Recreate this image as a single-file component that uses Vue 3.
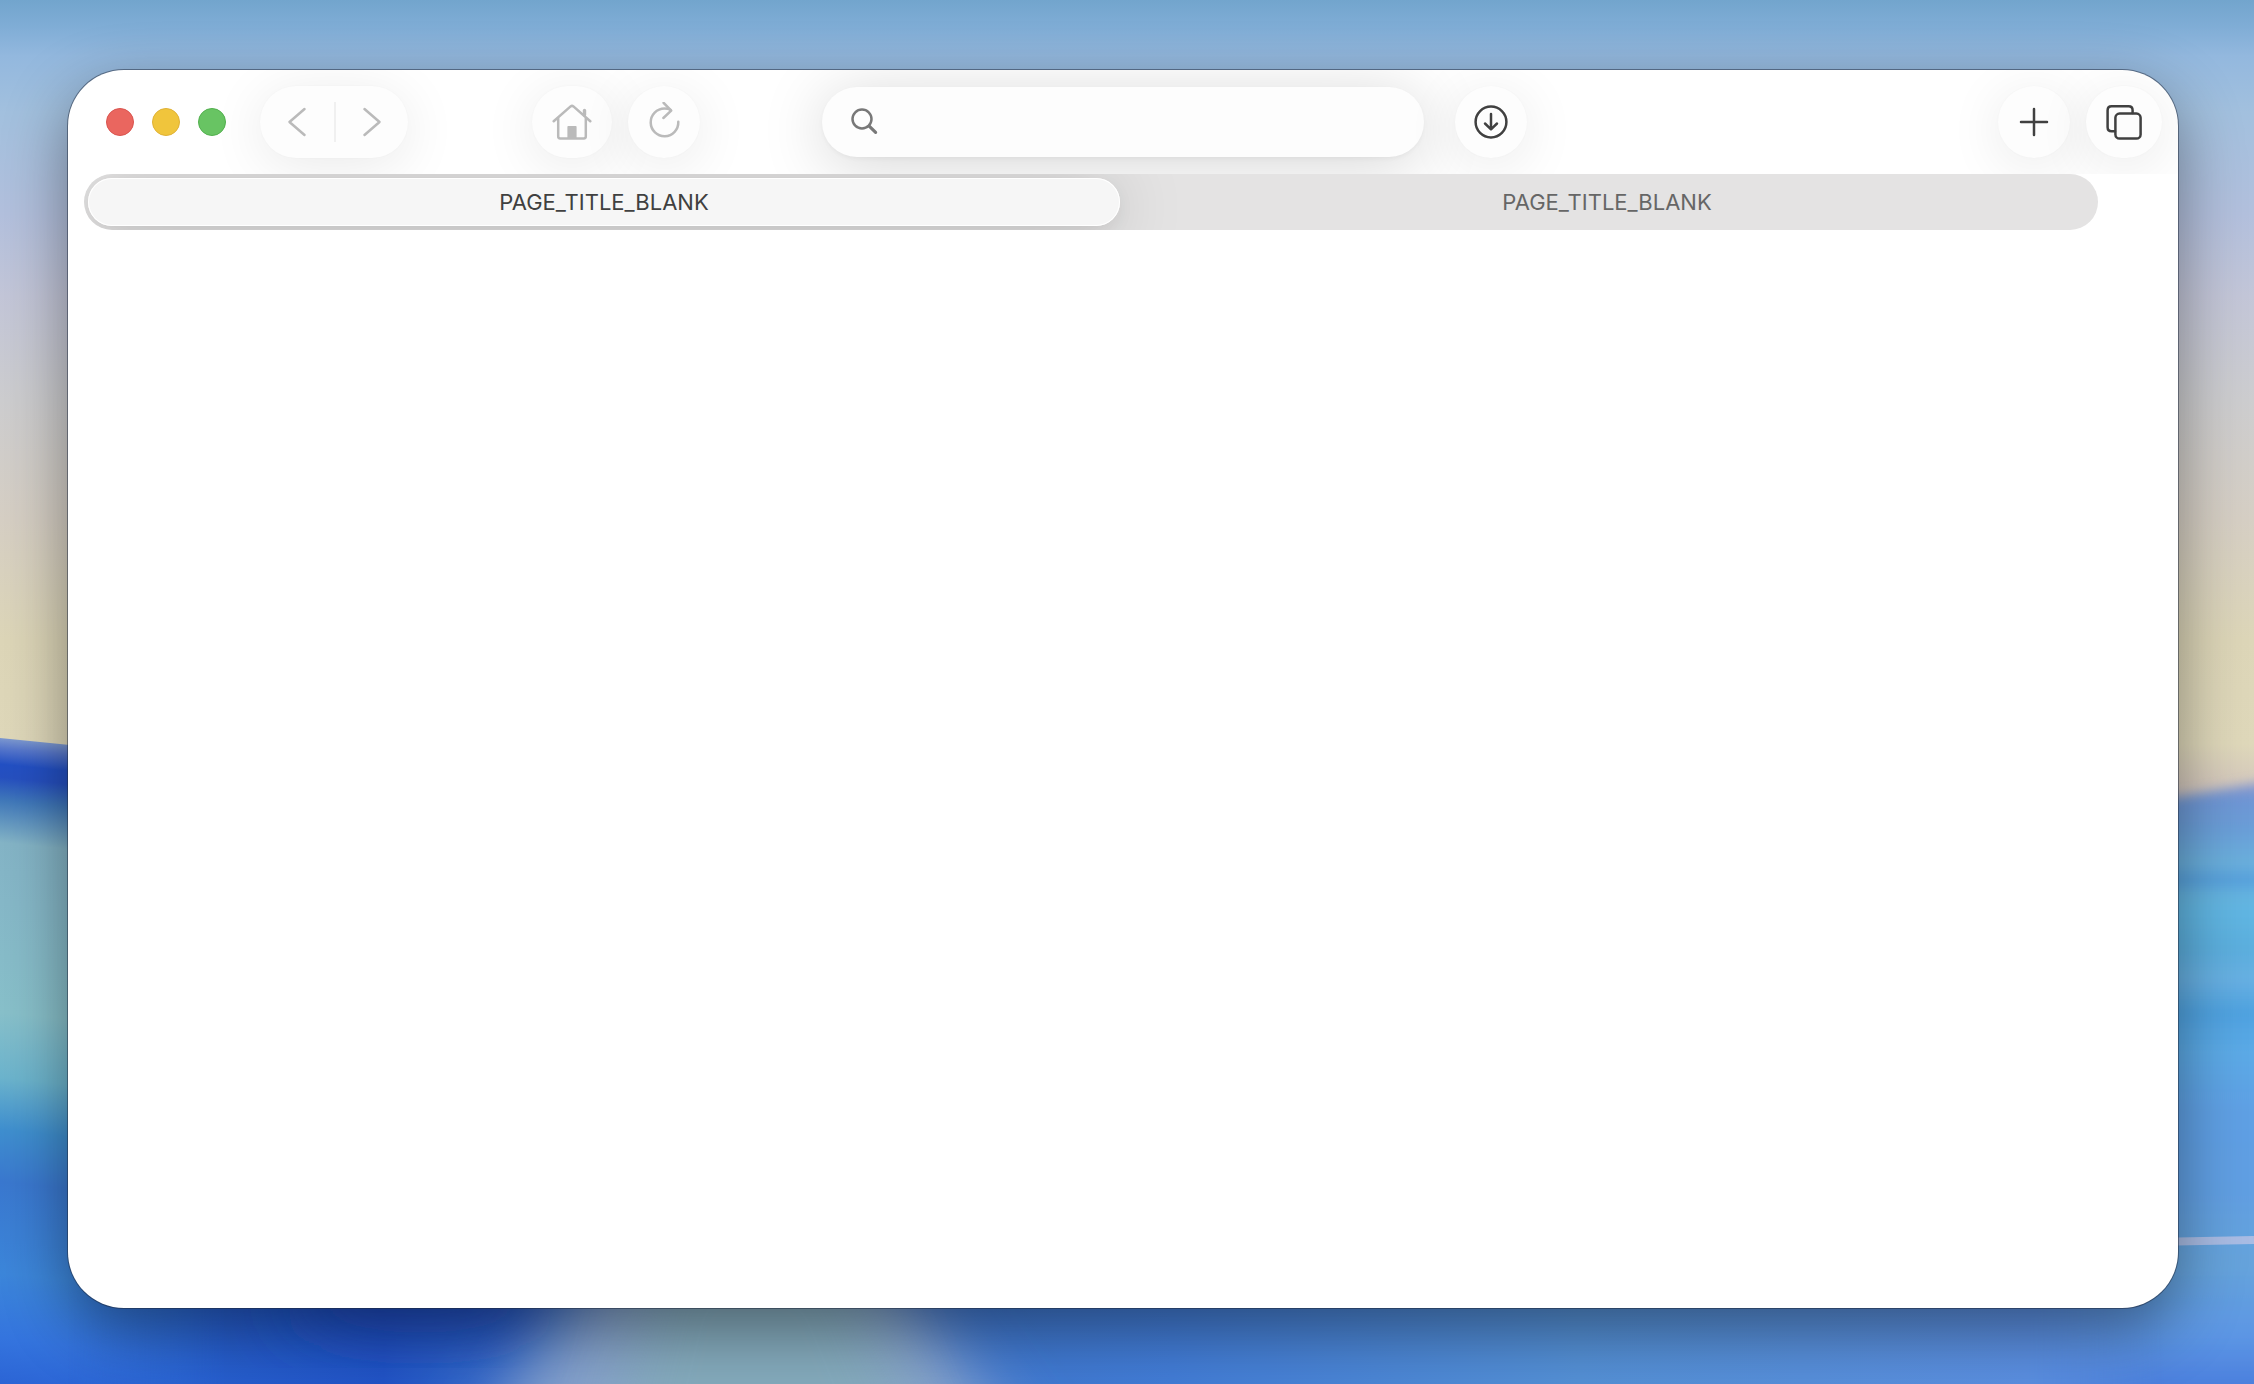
<script setup>
import { ref } from 'vue'

const query = ref('')
const active = ref(0)
const tabs = ref([
  { id: 0, title: 'PAGE_TITLE_BLANK' },
  { id: 1, title: 'PAGE_TITLE_BLANK' },
])
</script>

<template>
  <div class="desktop">
    <svg class="wallpaper" viewBox="0 0 2254 1384" preserveAspectRatio="none" aria-hidden="true">
      <defs>
        <linearGradient id="sky" gradientUnits="userSpaceOnUse" x1="0" y1="0" x2="0" y2="800">
          <stop offset="0" stop-color="#72a5cd" />
          <stop offset="0.03" stop-color="#7eacd5" />
          <stop offset="0.07" stop-color="#93b8de" />
          <stop offset="0.14" stop-color="#a2c0de" />
          <stop offset="0.27" stop-color="#b3c0dd" />
          <stop offset="0.37" stop-color="#c3c6d8" />
          <stop offset="0.5" stop-color="#cdcdcf" />
          <stop offset="0.65" stop-color="#d6cfc4" />
          <stop offset="0.8" stop-color="#ddd6b8" />
          <stop offset="0.93" stop-color="#dfd8ba" />
          <stop offset="1" stop-color="#d0c2bd" />
        </linearGradient>
        <linearGradient id="hill" gradientUnits="userSpaceOnUse" x1="0" y1="738" x2="-65" y2="1384">
          <stop offset="0" stop-color="#7c98d0" />
          <stop offset="0.015" stop-color="#5878cc" />
          <stop offset="0.04" stop-color="#2350c4" />
          <stop offset="0.06" stop-color="#2650c0" />
          <stop offset="0.095" stop-color="#4078ba" />
          <stop offset="0.16" stop-color="#84b4c6" />
          <stop offset="0.25" stop-color="#86b8c8" />
          <stop offset="0.42" stop-color="#88c0ca" />
          <stop offset="0.52" stop-color="#6cb4cd" />
          <stop offset="0.6" stop-color="#3f8fcf" />
          <stop offset="0.68" stop-color="#3a78cf" />
          <stop offset="0.82" stop-color="#3c86da" />
          <stop offset="0.92" stop-color="#3474de" />
          <stop offset="1" stop-color="#2a62d4" />
        </linearGradient>
        <linearGradient id="sea" gradientUnits="userSpaceOnUse" x1="0" y1="780" x2="0" y2="1384">
          <stop offset="0" stop-color="#9298cc" />
          <stop offset="0.03" stop-color="#6e95d4" />
          <stop offset="0.08" stop-color="#6b9ed8" />
          <stop offset="0.14" stop-color="#6bb0dc" />
          <stop offset="0.165" stop-color="#549edc" />
          <stop offset="0.19" stop-color="#66b4e0" />
          <stop offset="0.22" stop-color="#60b6e2" />
          <stop offset="0.28" stop-color="#5baede" />
          <stop offset="0.33" stop-color="#68b0e2" />
          <stop offset="0.385" stop-color="#4ea2e0" />
          <stop offset="0.45" stop-color="#5caae6" />
          <stop offset="0.55" stop-color="#5ea0e4" />
          <stop offset="0.68" stop-color="#619fe2" />
          <stop offset="0.8" stop-color="#66a4dc" />
          <stop offset="0.92" stop-color="#5c96e4" />
          <stop offset="1" stop-color="#4c80de" />
        </linearGradient>
        <linearGradient id="floor" gradientUnits="userSpaceOnUse" x1="0" y1="0" x2="2254" y2="0">
          <stop offset="0.04" stop-color="#2b66d4" />
          <stop offset="0.11" stop-color="#255ccc" />
          <stop offset="0.17" stop-color="#2153c6" />
          <stop offset="0.2" stop-color="#2b60c8" />
          <stop offset="0.45" stop-color="#3f78d0" />
          <stop offset="0.52" stop-color="#427cd6" />
          <stop offset="0.7" stop-color="#5490d6" />
          <stop offset="0.9" stop-color="#5a8ee0" />
        </linearGradient>
        <linearGradient id="fade" gradientUnits="userSpaceOnUse" x1="0" y1="0" x2="2254" y2="0">
          <stop offset="0.03" stop-color="#000" />
          <stop offset="0.1" stop-color="#fff" />
          <stop offset="0.9" stop-color="#fff" />
          <stop offset="0.96" stop-color="#000" />
        </linearGradient>
        <mask id="floorMask" maskUnits="userSpaceOnUse" x="0" y="1200" width="2254" height="184">
          <rect y="1200" width="2254" height="184" fill="url(#fade)" />
        </mask>
        <filter id="soft" x="-30%" y="-50%" width="160%" height="200%">
          <feGaussianBlur stdDeviation="32" />
        </filter>
        <filter id="edge" x="-10%" y="-10%" width="120%" height="120%">
          <feGaussianBlur stdDeviation="6" />
        </filter>
      </defs>
      <rect width="2254" height="1384" fill="url(#sky)" />
      <path d="M0 738 L120 750 L1100 850 V1384 H0Z" fill="url(#hill)" />
      <path d="M1100 880 L2178 797 L2300 776 V1420 H1100Z" fill="url(#sea)" filter="url(#edge)" />
      <path d="M2100 1243 L2254 1240" stroke="#a9bce4" stroke-width="8" />
      <g mask="url(#floorMask)">
        <rect y="1200" width="2254" height="184" fill="url(#floor)" />
        <ellipse cx="420" cy="1300" rx="130" ry="34" fill="#1a46b8" filter="url(#soft)" />
        <path d="M450 1480 Q540 1340 610 1240 H860 Q940 1320 1040 1480Z" fill="#86a2cc" filter="url(#soft)" />
        <path d="M600 1480 L660 1240 H840 L940 1480Z" fill="#84acba" opacity="0.85" filter="url(#soft)" />
      </g>
    </svg>

    <main class="window">
      <header class="toolbar">
        <div class="side start">
          <div class="lights">
            <button class="light red" aria-label="Close"></button>
            <button class="light yellow" aria-label="Minimize"></button>
            <button class="light green" aria-label="Zoom"></button>
          </div>
          <nav class="pill history" aria-label="History">
            <button class="half back" aria-label="Back">
              <svg width="20" height="32" viewBox="0 0 20 32"><path d="M17.5 3 L2.5 16 L17.5 29" /></svg>
            </button>
            <span class="divider"></span>
            <button class="half forward" aria-label="Forward">
              <svg width="20" height="32" viewBox="0 0 20 32"><path d="M2.5 3 L17.5 16 L2.5 29" /></svg>
            </button>
          </nav>
          <div class="page-tools">
            <button class="pill home" aria-label="Home">
              <svg width="40" height="40" viewBox="0 0 40 40">
                <path d="M1.7 19.2 L18.6 4.4 Q20 3.3 21.4 4.4 L38.3 19.2" />
                <path d="M6.2 16.5 V34.5 Q6.2 36.4 8.2 36.4 H31.8 Q33.8 36.4 33.8 34.5 V16.5" />
                <path d="M32.5 8.5 V13" stroke-width="3.4" />
                <path class="solid" d="M15.4 24.8 Q15.4 24 16.2 24 H23.8 Q24.6 24 24.6 24.8 V36.5 H15.4Z" />
              </svg>
            </button>
            <button class="pill" aria-label="Reload">
              <svg width="40" height="40" viewBox="0 0 40 40">
                <path d="M34.3 19.8 A13.8 13.8 0 1 1 20.5 6.6 Q24 6.6 26.6 7.8" />
                <path d="M19.6 0.8 L27.2 8.6 L19.4 16" />
              </svg>
            </button>
          </div>
        </div>

        <label class="search">
          <svg width="30" height="30" viewBox="0 0 30 30" aria-hidden="true">
            <circle cx="13" cy="12" r="9.5" />
            <path d="M20.2 19.2 L26.6 25.4" stroke-width="3.2" />
          </svg>
          <input v-model="query" type="text" aria-label="Search or enter address" />
        </label>

        <div class="side end">
          <button class="pill dark" aria-label="Downloads">
            <svg width="40" height="40" viewBox="0 0 40 40">
              <circle cx="20" cy="20" r="15.4" />
              <path d="M20 12 V27 M14 21.5 L20 27.3 L26 21.5" />
            </svg>
          </button>
          <button class="pill dark add" aria-label="New tab">
            <svg width="40" height="40" viewBox="0 0 40 40"><path d="M20 7 V33 M7 20 H33" /></svg>
          </button>
          <button class="pill dark overview" aria-label="Tab overview">
            <svg width="40" height="40" viewBox="0 0 40 40">
              <path d="M11 29.2 H7.6 Q3.6 29.2 3.6 25.2 V8.2 Q3.6 4.2 7.6 4.2 H24.6 Q28.6 4.2 28.6 8.2 V11" />
              <rect x="11.4" y="11.6" width="25.2" height="25" rx="4.2" />
            </svg>
          </button>
        </div>
      </header>

      <div class="tabs" role="tablist">
        <button
          v-for="tab in tabs"
          :key="tab.id"
          class="tab"
          :class="{ active: tab.id === active }"
          role="tab"
          :aria-selected="tab.id === active"
          @click="active = tab.id"
        >
          {{ tab.title }}
        </button>
      </div>
      <section class="page" role="tabpanel"></section>
    </main>
  </div>
</template>

<style>
body {
  margin: 0;
}
</style>

<style scoped>
.desktop {
  position: relative;
  box-sizing: border-box;
  display: flex;
  min-height: 100vh;
  padding: 70px 76px 76px 68px;
  overflow: hidden;
  font-family: Inter, "Liberation Sans", sans-serif;
}

.wallpaper {
  position: absolute;
  inset: 0;
  width: 100%;
  height: 100%;
}

.window {
  position: relative;
  flex: 1;
  min-width: 0;
  display: flex;
  flex-direction: column;
  background: #fff;
  border-radius: 56px;
  box-shadow:
    0 0 0 1px rgba(30, 40, 60, 0.5),
    0 22px 64px rgba(0, 0, 0, 0.42);
}

.toolbar {
  display: grid;
  grid-template-columns: 1fr 28.5% 1fr;
  align-items: center;
  height: 104px;
}

.side {
  display: flex;
  align-items: center;
}

.start {
  padding-left: 38px;
}

.end {
  padding: 0 16px 0 31px;
}

button {
  display: flex;
  align-items: center;
  justify-content: center;
  margin: 0;
  padding: 0;
  border: 0;
  background: none;
  font: inherit;
  color: inherit;
}

svg {
  flex: none;
}

button svg,
.search svg {
  fill: none;
  stroke: currentColor;
  stroke-width: 2.5;
  stroke-linecap: round;
  stroke-linejoin: round;
}

button svg .solid {
  fill: currentColor;
  stroke: none;
}

.lights {
  display: flex;
  gap: 18px;
  margin-right: 34px;
}

.light {
  width: 28px;
  height: 28px;
  border-radius: 50%;
}

.red {
  background: #ea665f;
  border: 1px solid #d9544f;
}

.yellow {
  background: #f0c53c;
  border: 1px solid #dfb136;
}

.green {
  background: #68c463;
  border: 1px solid #52b04e;
}

.pill {
  width: 72px;
  height: 72px;
  border-radius: 36px;
  background: #fdfdfd;
  color: #bababa;
  box-shadow:
    0 0 2px rgba(0, 0, 0, 0.03),
    0 8px 56px rgba(0, 0, 0, 0.09);
}

.pill.dark {
  color: #404040;
}

.history {
  display: flex;
  align-items: center;
  width: 148px;
}

.half {
  height: 72px;
}

.back {
  width: 74px;
}

.forward {
  flex: 1;
}

.divider {
  width: 2px;
  height: 40px;
  background: #f0f0f0;
}

.page-tools {
  display: flex;
  gap: 16px;
  margin-left: auto;
  margin-right: 122px;
}

.home {
  width: 80px;
}

.search {
  display: flex;
  align-items: center;
  gap: 12px;
  height: 70px;
  box-sizing: border-box;
  padding: 0 27px;
  border-radius: 35px;
  background: #fdfdfd;
  color: #787878;
  box-shadow:
    0 2px 4px rgba(0, 0, 0, 0.04),
    0 8px 64px rgba(0, 0, 0, 0.17);
}

.search input {
  flex: 1;
  min-width: 0;
  border: 0;
  outline: 0;
  background: none;
  font: inherit;
  font-size: 22px;
  color: #404040;
}

.add {
  margin-left: auto;
  margin-right: 16px;
}

.overview {
  width: 76px;
}

.toolbar {
  overflow: hidden;
  border-radius: 56px 56px 0 0;
}

.tabs {
  position: relative;
  display: flex;
  margin: 0 80px 0 16px;
  padding: 4px;
  border-radius: 28px;
  background: #e4e3e3;
  overflow: hidden;
}

.tab {
  flex: 974 1 0;
  height: 48px;
  border-radius: 24px;
  font-size: 22px;
  line-height: 28px;
  color: #666;
}

.tab.active {
  flex-grow: 1032;
  background: #f6f6f6;
  color: #404040;
  box-shadow:
    inset 0 0 0 1px #fff,
    0 6px 16px rgba(0, 0, 0, 0.06),
    0 6px 72px rgba(0, 0, 0, 0.18);
}

.page {
  flex: 1;
}
</style>
